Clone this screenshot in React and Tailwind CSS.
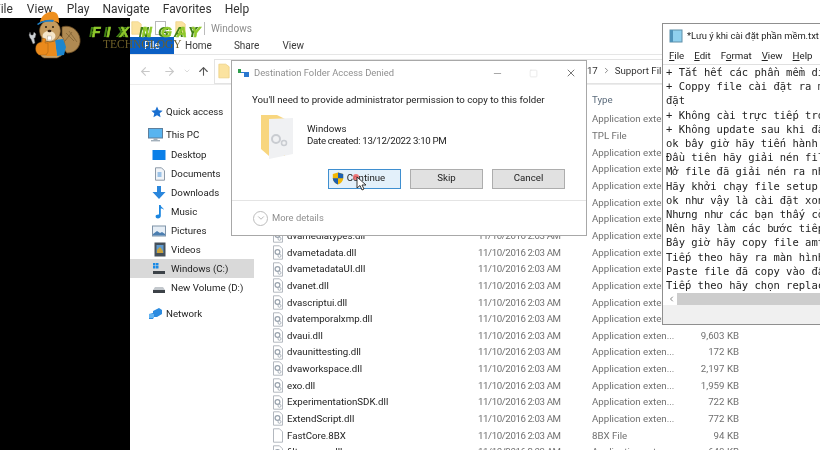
import React from 'react';
import { ArrowLeft, ArrowRight, ArrowUp, ChevronDown, ChevronRight, Minus, Square, X } from 'lucide-react';

const segoe = { fontFamily: 'Roboto, "Open Sans", sans-serif' };

const files = [
  { name: '', date: '', type: 'Application exten...', size: '' },
  { name: '', date: '', type: 'TPL File', size: '' },
  { name: '', date: '', type: 'Application exten...', size: '' },
  { name: '', date: '', type: 'Application exten...', size: '' },
  { name: '', date: '', type: 'Application exten...', size: '' },
  { name: '', date: '', type: 'Application exten...', size: '' },
  { name: '', date: '', type: 'Application exten...', size: '' },
  { name: 'dvamediatypes.dll', date: '11/10/2016 2:03 AM', type: 'Application exten...', size: '' },
  { name: 'dvametadata.dll', date: '11/10/2016 2:03 AM', type: 'Application exten...', size: '' },
  { name: 'dvametadataUI.dll', date: '11/10/2016 2:03 AM', type: 'Application exten...', size: '' },
  { name: 'dvanet.dll', date: '11/10/2016 2:03 AM', type: 'Application exten...', size: '' },
  { name: 'dvascriptui.dll', date: '11/10/2016 2:03 AM', type: 'Application exten...', size: '' },
  { name: 'dvatemporalxmp.dll', date: '11/10/2016 2:03 AM', type: 'Application exten...', size: '' },
  { name: 'dvaui.dll', date: '11/10/2016 2:03 AM', type: 'Application exten...', size: '9,603 KB' },
  { name: 'dvaunittesting.dll', date: '11/10/2016 2:03 AM', type: 'Application exten...', size: '172 KB' },
  { name: 'dvaworkspace.dll', date: '11/10/2016 2:03 AM', type: 'Application exten...', size: '2,197 KB' },
  { name: 'exo.dll', date: '11/10/2016 2:03 AM', type: 'Application exten...', size: '1,959 KB' },
  { name: 'ExperimentationSDK.dll', date: '11/10/2016 2:03 AM', type: 'Application exten...', size: '722 KB' },
  { name: 'ExtendScript.dll', date: '11/10/2016 2:03 AM', type: 'Application exten...', size: '772 KB' },
  { name: 'FastCore.8BX', date: '11/10/2016 2:03 AM', type: '8BX File', size: '94 KB', plain: true },
  { name: 'filter_core.dll', date: '11/10/2016 2:03 AM', type: 'Application exten...', size: '648 KB' },
];

const noteLines = [
  '+ Tắt hết các phần mềm diệt virus',
  '+ Coppy file cài đặt ra màn hình để cài',
  'đặt',
  '+ Không cài trực tiếp trong file nén',
  '+ Không update sau khi đã cài đặt xong',
  'ok bây giờ hãy tiến hành cài đặt',
  'Đầu tiên hãy giải nén file',
  'Mở file đã giải nén ra nhé',
  'Hãy khởi chạy file setup',
  'ok như vậy là cài đặt xong',
  'Nhưng như các bạn thấy còn',
  'Nên hãy làm các bước tiếp theo',
  'Bây giờ hãy copy file amtlib',
  'Tiếp theo hãy ra màn hình',
  'Paste file đã copy vào đây',
  'Tiếp theo hãy chọn replace',
];

const FolderTiny = ({ className }) => (
  <svg className={className} viewBox="0 0 14 18">
    <path d="M1 1h8l4 3v13H1z" fill="#fbe3a0" stroke="#eccb78" strokeWidth="0.8" />
  </svg>
);

const DllIcon = ({ plain }) => (
  <svg width="12" height="15" viewBox="0 0 12 15" className="shrink-0">
    <path d="M1.5.8h6l3 3v10.400h-9z" fill="#fff" stroke="#aab0b8" strokeWidth="0.9" />
    {!plain && <circle cx="5.5" cy="7" r="2.4" fill="none" stroke="#98a2ad" strokeWidth="1.2" />}
    {!plain && <circle cx="7.5" cy="10.8" r="1.5" fill="none" stroke="#aab2bb" strokeWidth="1" />}
  </svg>
);

const FileRow = ({ file }) => (
  <div className="flex h-[16.65px] items-center text-[9.7px] leading-none">
    <div className="flex w-[206px] items-center gap-[3px] text-[#222]">
      {file.name ? <DllIcon plain={file.plain} /> : <span className="w-3" />}
      <span className="whitespace-nowrap">{file.name}</span>
    </div>
    <div className="w-[114px] whitespace-nowrap tracking-[-0.4px] text-[#707070]">{file.date}</div>
    <div className="w-[88px] whitespace-nowrap text-[#707070]">{file.type}</div>
    <div className="w-[59px] whitespace-nowrap text-right text-[#707070]">{file.size}</div>
  </div>
);

const navIcons = {
  desktop: (
    <svg width="14" height="12" viewBox="0 0 14 12"><rect x="0.5" y="1" width="13" height="10" fill="#0a7fe8" /></svg>
  ),
  documents: (
    <svg width="12" height="14" viewBox="0 0 12 14">
      <path d="M1.5.8h6l3 3v9.400h-9z" fill="#f1f4f8" stroke="#8d9aa8" />
      <rect x="3.5" y="5" width="4" height="5" fill="#9cc3e8" />
    </svg>
  ),
  downloads: (
    <svg width="14" height="15" viewBox="0 0 14 15"><path d="M5 1h4v6h4.500L7 14 .5 7H5z" fill="#2a86dc" /></svg>
  ),
  music: (
    <svg width="12" height="15" viewBox="0 0 12 15">
      <path d="M5 1h1.600c.3 2.400 3 2.600 3.400 5-1-1-2-1.400-3.200-1.400V12c0 1.500-1.300 2.400-2.800 2.400S1.600 13.600 1.600 12.400 3 10.400 5 10.600z" fill="#1c86e0" />
    </svg>
  ),
  pictures: (
    <svg width="14" height="12" viewBox="0 0 14 12">
      <rect x="0.5" y="1" width="13" height="10" fill="#e6eef6" stroke="#7f93a8" />
      <path d="M1 9l4-3 3 2 2-1 3 2v1.500H1z" fill="#4b7eb0" />
    </svg>
  ),
  videos: (
    <svg width="12" height="15" viewBox="0 0 12 15">
      <rect x="0.5" y="0.500" width="11" height="14" fill="#46505a" />
      <rect x="2.500" y="3" width="7" height="8" fill="#5f9bd0" />
      <path d="M3 8l3-3 3 4v2H3z" fill="#caa33c" />
    </svg>
  ),
  windows: (
    <svg width="14" height="13" viewBox="0 0 14 13">
      <path d="M1 1h2.500v2.500H1zM4 1h2.500v2.500H4zM1 4h2.500v2.500H1zM4 4h2.500v2.500H4z" fill="#1a8ae6" />
      <rect x="1" y="9" width="12" height="3" fill="#3c4248" />
    </svg>
  ),
  volume: (
    <svg width="14" height="13" viewBox="0 0 14 13">
      <path d="M3 6h8l2 3H1z" fill="#c3c8cd" />
      <rect x="1" y="9" width="12" height="3" fill="#3c4248" />
    </svg>
  ),
};

const NavItem = ({ icon, label, active }) => (
  <div className={`flex h-[19px] items-center ${active ? 'bg-[#d9d9d9]' : ''}`}>
    <span className="flex w-[41px] shrink-0 justify-end pr-[5px]">{icon}</span>
    <span className="whitespace-nowrap">{label}</span>
  </div>
);

const Sidebar = () => (
  <div className="w-[124px] shrink-0 pt-[17px] text-[9.7px] leading-none text-[#222]">
    <div className="flex h-[19px] items-center pl-[21px]">
      <svg width="12" height="12" viewBox="0 0 24 24" className="mr-[3px]">
        <path d="M12 1l3.400 7.400 8 .9-6 5.400 1.700 7.900L12 18.600l-7.100 4 1.700-7.900-6-5.400 8-.9z" fill="#1a6fd0" />
      </svg>
      Quick access
    </div>
    <div className="flex h-[24px] items-center pl-[18px] pt-[4px]">
      <svg width="15" height="14" viewBox="0 0 15 14" className="mr-[3px]">
        <rect x="0.500" y="0.500" width="14" height="9.500" fill="#58b4f0" stroke="#5e7f9c" />
        <rect x="5.500" y="10" width="4" height="2" fill="#a3b0bb" />
        <rect x="3" y="12" width="9" height="1.400" fill="#a3b0bb" />
      </svg>
      This PC
    </div>
    <NavItem icon={navIcons.desktop} label="Desktop" />
    <NavItem icon={navIcons.documents} label="Documents" />
    <NavItem icon={navIcons.downloads} label="Downloads" />
    <NavItem icon={navIcons.music} label="Music" />
    <NavItem icon={navIcons.pictures} label="Pictures" />
    <NavItem icon={navIcons.videos} label="Videos" />
    <NavItem icon={navIcons.windows} label="Windows (C:)" active />
    <NavItem icon={navIcons.volume} label="New Volume (D:)" />
    <div className="mt-[7px] flex h-[19px] items-center pl-[18px]">
      <svg width="15" height="13" viewBox="0 0 15 13" className="mr-[3px]">
        <path d="M5 4l6-3 3 2v4l-5 3H6l-1 2H1V7l4-1z" fill="#2b8be0" />
        <path d="M1 7h5v4H1z" fill="#63b4f2" />
      </svg>
      Network
    </div>
  </div>
);

const Explorer = () => (
  <div className="flex min-w-0 flex-1 flex-col overflow-hidden bg-white">
    {/* title row */}
    <div className="flex h-[18px] items-center pl-[1px] pt-[2px] text-[10px] text-[#8c8c8c]">
      <FolderTiny className="h-[16px] w-[11px]" />
      <span className="ml-[13px] h-[14px] w-[11px] border border-[#b8b8b8] bg-white" />
      <FolderTiny className="ml-[9px] h-[16px] w-[11px]" />
      <ChevronDown size={9} className="ml-[3px] text-[#555]" />
      <span className="ml-[6px] h-[13px] w-px bg-[#bbb]" />
      <span className="ml-[6px]">Windows</span>
    </div>
    {/* ribbon tabs */}
    <div className="flex h-[19px] items-center border-b border-[#e6e6e6] pt-[1px] text-[10px] text-[#3a3a3a]">
      <div className="flex h-full w-[44px] items-center justify-center bg-[#0b5fc4] text-white">File</div>
      <span className="ml-[11px]">Home</span>
      <span className="ml-[22px]">Share</span>
      <span className="ml-[23px]">View</span>
    </div>
    {/* address bar */}
    <div className="flex h-[30px] items-center border-b border-[#ececec] pl-[9px] pt-[3px] text-[#c8c8c8]">
      <ArrowLeft size={13} />
      <ArrowRight size={13} className="ml-[11px]" />
      <ChevronDown size={8} className="ml-[7px]" />
      <ArrowUp size={13} className="ml-[6px] text-[#555]" />
      <div className="ml-[4px] flex h-[25px] flex-1 items-center border border-[#e3e3e3] pl-[3px]">
        <FolderTiny className="h-[16px] w-[12px]" />
        <div className="ml-[346px] flex items-center whitespace-nowrap text-[9.7px] text-[#333]">
          <span>2017</span>
          <ChevronRight size={9} className="mx-[4px] text-[#666]" />
          <span>Support Files</span>
        </div>
      </div>
    </div>
    {/* body */}
    <div className="flex min-h-0 flex-1">
      <Sidebar />
      <div className="min-w-0 flex-1 pl-[18px]">
        <div className="flex h-[26px] items-start pt-[10px] text-[9.7px] leading-none text-[#5b6b7b]">
          <span className="ml-[320px]">Type</span>
        </div>
        {files.map((file, i) => (
          <FileRow key={i} file={file} />
        ))}
      </div>
    </div>
  </div>
);

const Logo = () => (
  <div className="absolute left-[28px] top-[8px] h-[54px] w-[180px]">
    <svg width="56" height="52" viewBox="28 8 56 52" className="absolute left-0 top-0">
      {/* tail */}
      <path d="M62 27c8-3 17 3 18 12 1 8-5 14-13 14l-5-6z" fill="#b08a52" stroke="#6e4f25" strokeWidth="0.8" />
      <path d="M66 33l8 8M72 32l-7 9M69 31l8 11" stroke="#7d5e30" strokeWidth="0.7" fill="none" />
      {/* body */}
      <path d="M42 36c6-4 16-4 21 2 3 5 2 14-2 18l-4 2H44c-3-1-4-3-4-6z" fill="#c9a064" stroke="#6e4f25" strokeWidth="0.6" />
      {/* overalls */}
      <path d="M55 40l8-1 3 8-2 8-7 1z" fill="#1c86cf" />
      <path d="M44 42l11-1 2 15H46z" fill="#ea8a1c" />
      {/* head */}
      <ellipse cx="50" cy="31" rx="10.500" ry="11" fill="#c49b5e" stroke="#6e4f25" strokeWidth="0.6" />
      <ellipse cx="49" cy="36" rx="6.500" ry="5" fill="#f4e5c8" />
      <circle cx="46" cy="27" r="1" fill="#2a1c0c" />
      <circle cx="53" cy="27" r="1" fill="#2a1c0c" />
      <ellipse cx="49.500" cy="31" rx="2" ry="1.300" fill="#3a2412" />
      <rect x="47.500" y="36" width="4" height="4" fill="#fff" stroke="#8a7a60" strokeWidth="0.3" />
      {/* hat */}
      <path d="M40 22c1-6 7-11 14-10 4 1 5 5 5 11-6-3-12-3-19-1z" fill="#ee8f1e" />
      <path d="M37 24c4-3 10-5 17-4l-1 2c-6-1-11 0-15 3z" fill="#1f7fc4" />
      {/* thumb and wrench */}
      <path d="M36 46c1-3 4-4 6-4l1-4 3 1-1 4h3v9l-2 3h-7c-3-2-4-5-3-9z" fill="#ea8a1c" stroke="#8a5410" strokeWidth="0.4" />
      <path d="M30 32l1 3 2 0 1-3 2 2-1 4-1 0 1 5-2 1-2-5-1-1-1-3z" fill="#ccd0d4" stroke="#555" strokeWidth="0.4" />
    </svg>
    <div
      className="absolute left-[64px] top-[17px] flex text-[14px] font-bold italic leading-none text-[#8fc92c] [-webkit-text-stroke:0.6px_#8fc92c] [text-shadow:-3px_0_#3f7f14]"
      style={{ fontFamily: '"Liberation Sans", sans-serif' }}
    >
      <span>F</span>
      <span className="ml-[6px]">I</span>
      <span className="ml-[9px]">X</span>
      <span className="ml-[13px]">N</span>
      <span className="ml-[9px]">G</span>
      <span className="ml-[5px]">A</span>
      <span className="ml-[4px]">Y</span>
    </div>
    <div
      className="absolute left-[75px] top-[31px] whitespace-nowrap text-[11.5px] leading-none text-[#6e5f28]"
      style={{ fontFamily: '"Liberation Serif", serif' }}
    >
      TECHNOLOGY
    </div>
  </div>
);

const DialogButton = ({ children, primary }) => (
  <div
    className={`flex h-[20px] w-[73px] items-center justify-center border text-[9.7px] text-[#222] ${
      primary ? 'border-[#3f8fd0] bg-[#e3f0fa]' : 'border-[#adadad] bg-[#e1e1e1]'
    }`}
  >
    {children}
  </div>
);

const Dialog = () => (
  <div className="absolute left-[231px] top-[60px] flex h-[176px] w-[356px] flex-col border border-[#a8a8a8] bg-white text-[#222]">
    <div className="flex h-[24px] items-center pl-[6px] text-[9.4px] text-[#8f8f8f]">
      <svg width="12" height="10" viewBox="0 0 12 10" className="mr-[4px]">
        <rect x="0" y="1" width="3" height="4" fill="#2e9e4c" />
        <rect x="6" y="4" width="5" height="5" fill="#2a78d0" />
        <path d="M3 4h3v1H3z" fill="#2a78d0" />
      </svg>
      Destination Folder Access Denied
      <div className="ml-auto flex items-center text-[#a0a0a0]">
        <Minus size={11} />
        <Square size={9} className="ml-[26px] text-[#e4e4e4]" />
        <X size={12} className="ml-[27px] mr-[9px] text-[#777]" />
      </div>
    </div>
    <div className="whitespace-nowrap pl-[20px] pt-[10px] text-[9.7px] leading-none">
      You'll need to provide administrator permission to copy to this folder
    </div>
    <div className="mt-[9px] flex pl-[28px]">
      <svg width="34" height="46" viewBox="0 0 34 46">
        <path d="M1 1h16l8 4v37H9L1 35z" fill="#f8d67f" />
        <path d="M9 5l24-1v36L9 45z" fill="#f0f1f3" />
        <circle cx="16" cy="25" r="4" fill="none" stroke="#c9ccd1" strokeWidth="2" />
        <circle cx="24" cy="29" r="2.500" fill="none" stroke="#c9ccd1" strokeWidth="1.500" />
      </svg>
      <div className="ml-[13px] pt-[9px] text-[9.7px] leading-[12px]">
        <div>Windows</div>
        <div className="tracking-[-0.3px]">Date created: 13/12/2022 3:10 PM</div>
      </div>
    </div>
    <div className="mt-[9px] flex justify-end gap-[9px] pr-[21px]">
      <div className="relative">
        <DialogButton primary>
          <svg width="12" height="13" viewBox="0 0 12 13" className="absolute left-[4px] top-[3px]">
            <path d="M6 .5l5.200 1.600v4.200c0 3-2.200 5.200-5.200 6.300C3 11.500.8 9.300.8 6.300V2.100z" fill="#f2b705" />
            <path d="M6 .5l5.200 1.600v4.200H6zM6 6.300v6.300C3 11.500.8 9.300.8 6.300z" fill="#1c5fb0" />
          </svg>
          <span className="ml-[3px]">Continue</span>
        </DialogButton>
        <span className="absolute left-[25px] top-[5px] h-[6px] w-[6px] rounded-full bg-[#ef5a5a]/80" />
        <svg width="12" height="17" viewBox="0 0 12 17" className="absolute left-[28px] top-[7px]">
          <path d="M1 1v11l3-2.500 2 4.500 2-1-2-4h4z" fill="#fff" stroke="#222" strokeWidth="0.9" />
        </svg>
      </div>
      <DialogButton>Skip</DialogButton>
      <DialogButton>Cancel</DialogButton>
    </div>
    <div className="mt-auto flex h-[35px] items-center border-t border-[#e4e4e4] pl-[21px] text-[9.4px] text-[#8f8f8f]">
      <span className="flex h-[15px] w-[15px] items-center justify-center rounded-full border border-[#bdbdbd]">
        <ChevronDown size={10} className="text-[#aaa]" />
      </span>
      <span className="ml-[4px]">More details</span>
    </div>
  </div>
);

const Notepad = () => (
  <div className="absolute left-[662px] top-[23px] flex h-[302px] w-[170px] flex-col overflow-hidden border border-[#8f8f8f] bg-white">
    <div className="flex h-[24px] items-center pl-[6px] text-[9.4px] text-[#222]">
      <svg width="14" height="14" viewBox="0 0 14 14" className="mr-[4px] shrink-0">
        <rect x="1" y="1" width="12" height="12" fill="#8fd0ee" stroke="#5f8fa8" />
        <rect x="1" y="1" width="3" height="12" fill="#4f93ba" />
      </svg>
      <span className="whitespace-nowrap">*Lưu ý khi cài đặt phần mềm.txt</span>
    </div>
    <div className="flex h-[17px] items-center gap-[10px] border-b border-[#e0e0e0] pl-[6px] text-[9.7px] text-[#222]">
      <span><u>F</u>ile</span>
      <span><u>E</u>dit</span>
      <span>F<u>o</u>rmat</span>
      <span><u>V</u>iew</span>
      <span><u>H</u>elp</span>
    </div>
    <div
      className="flex-1 overflow-hidden whitespace-nowrap pl-[3px] text-[10.5px] leading-[14.2px] text-[#222]"
      style={{ fontFamily: '"DejaVu Sans Mono", monospace' }}
    >
      {noteLines.map((line, i) => (
        <div key={i}>{line}</div>
      ))}
    </div>
    <div className="flex h-[12px] items-center text-[#444]">
      <ChevronRight size={8} className="ml-[3px] w-[11px] rotate-180" />
      <div className="h-full flex-1 bg-[#cdcdcd]" />
    </div>
    <div className="h-[19px] bg-[#f0f0f0]" />
  </div>
);

export default function App() {
  return (
    <div className="relative flex h-[450px] w-[820px] flex-col overflow-hidden bg-black blur-[0.3px]" style={segoe}>
      <div className="flex h-[18px] items-center bg-white text-[12px] text-[#333]">
        <span className="ml-[-6px]">File</span>
        <span className="ml-[14px]">View</span>
        <span className="ml-[14px]">Play</span>
        <span className="ml-[13px]">Navigate</span>
        <span className="ml-[13px]">Favorites</span>
        <span className="ml-[13px]">Help</span>
      </div>
      <div className="flex min-h-0 flex-1">
        <div className="w-[130px] shrink-0 bg-black" />
        <Explorer />
      </div>
      <Logo />
      <Dialog />
      <Notepad />
    </div>
  );
}
